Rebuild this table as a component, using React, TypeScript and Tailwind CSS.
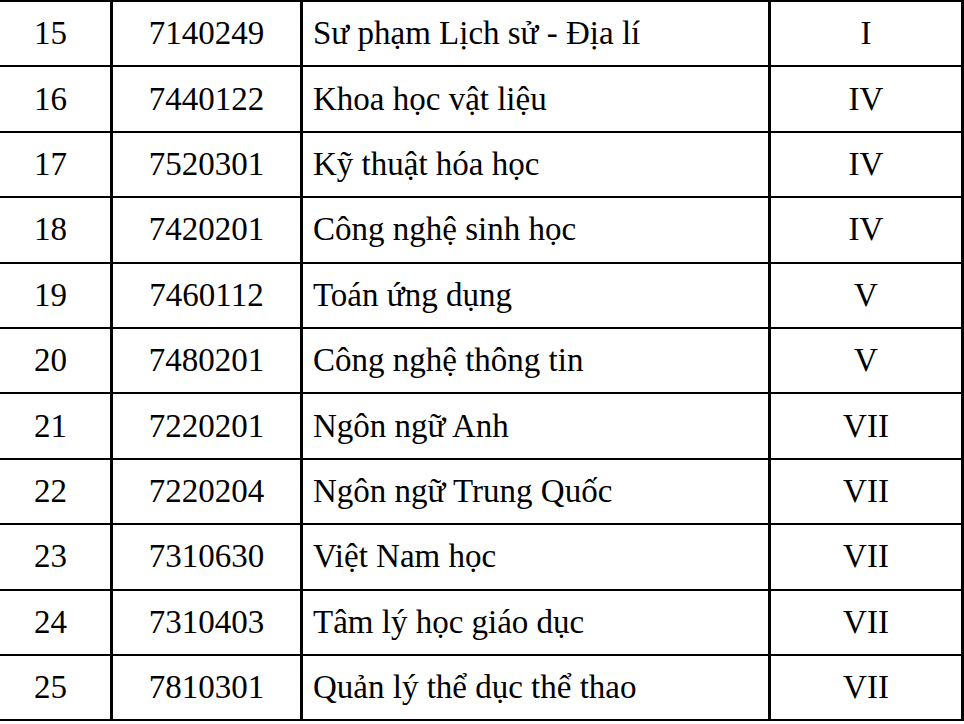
import React from "react";

const rows: [string, string, string, string][] = [
  ["15", "7140249", "Sư phạm Lịch sử - Địa lí", "I"],
  ["16", "7440122", "Khoa học vật liệu", "IV"],
  ["17", "7520301", "Kỹ thuật hóa học", "IV"],
  ["18", "7420201", "Công nghệ sinh học", "IV"],
  ["19", "7460112", "Toán ứng dụng", "V"],
  ["20", "7480201", "Công nghệ thông tin", "V"],
  ["21", "7220201", "Ngôn ngữ Anh", "VII"],
  ["22", "7220204", "Ngôn ngữ Trung Quốc", "VII"],
  ["23", "7310630", "Việt Nam học", "VII"],
  ["24", "7310403", "Tâm lý học giáo dục", "VII"],
  ["25", "7810301", "Quản lý thể dục thể thao", "VII"],
];

export default function App() {
  return (
    <div className="w-[964px] h-[724px] overflow-hidden bg-white text-black font-['Liberation_Serif','Times_New_Roman',serif] text-[33px] leading-none">
      <div className="ml-[-12px] w-[976px] border-b-[2.5px] border-black">
        {rows.map((r) => (
          <div key={r[0]} className="flex h-[65.4px] border-t-[2.5px] border-black">
            <div className="w-[122px] border-l-[3px] border-black flex items-center justify-center">{r[0]}</div>
            <div className="w-[190px] border-l-[3px] border-black flex items-center justify-center">{r[1]}</div>
            <div className="w-[468px] border-l-[3px] border-black flex items-center pl-[10px]">{r[2]}</div>
            <div className="w-[196px] border-l-[3px] border-r-[3px] border-black flex items-center justify-center">{r[3]}</div>
          </div>
        ))}
      </div>
    </div>
  );
}
